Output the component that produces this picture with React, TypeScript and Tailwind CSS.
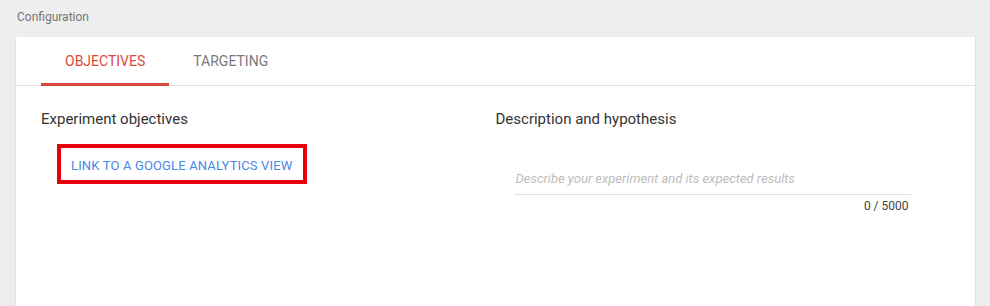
export default function App() {
  return (
    <div className="w-[990px] h-[306px] overflow-hidden bg-[#eeeeee] font-['Roboto',sans-serif]">
      <div className="pl-[17px] pt-[10px] h-[37px] text-[12px] leading-[15px] text-[#757575]">Configuration</div>
      <div className="ml-[16px] w-[959px] h-[300px] bg-white shadow-[0_1px_2px_rgba(0,0,0,0.15)]">
        <div className="flex h-[49px] pl-[25px] border-b border-[#e0e0e0]">
          <div className="relative flex items-center px-[24px] text-[14px] text-[#d84a3c]">
            OBJECTIVES
            <div className="absolute left-0 right-0 bottom-[-1px] h-[3px] bg-[#d84a3c]" />
          </div>
          <div className="flex items-center px-[24px] text-[14px] text-[#7a7a7a]">TARGETING</div>
        </div>
        <div className="grid grid-cols-2 px-[25px] pt-[24px]">
          <div>
            <div className="text-[15px] leading-[18px] text-[#333333]">Experiment objectives</div>
            <button className="mt-[16px] ml-[16px] w-[250px] h-[40px] border-[4px] border-[#e8000b] pl-[10px] pt-[3px] text-left text-[13px] tracking-[0.15px] text-[#4a86e8]">
              LINK TO A GOOGLE ANALYTICS VIEW
            </button>
          </div>
          <div>
            <div className="text-[15px] leading-[18px] text-[#333333]">Description and hypothesis</div>
            <div className="ml-[18px] w-[397px] mt-[42px]">
              <div className="border-b border-[#e0e0e0] pb-[6px] pl-[2px] text-[13px] leading-[18px] italic text-[#bdbdbd]">
                Describe your experiment and its expected results
              </div>
              <div className="text-right pr-[2px] pt-[4px] text-[12px] leading-[15px] text-[#424242]">0 / 5000</div>
            </div>
          </div>
        </div>
      </div>
    </div>
  );
}
